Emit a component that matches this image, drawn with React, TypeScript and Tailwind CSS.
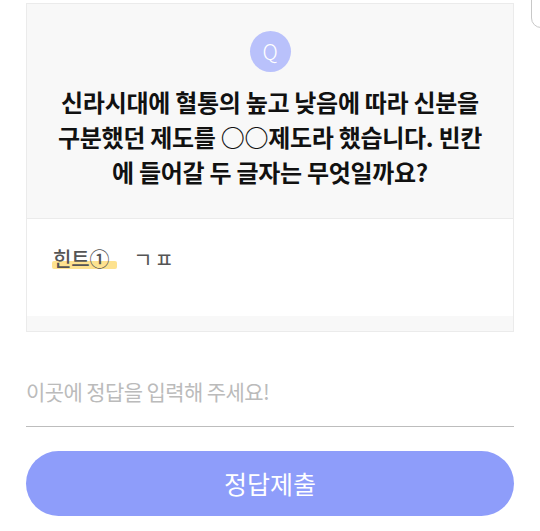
import React from 'react';

const font = { fontFamily: '"Noto Sans CJK KR", "Noto Sans", sans-serif' };

export default function App() {
  return (
    <div className="relative w-[540px] h-[531px] bg-white overflow-hidden" style={font}>
      {/* edge of the next card peeking in */}
      <div className="absolute left-[531px] top-[-12px] w-[40px] h-[40px] border border-[#c8c8c8] rounded-bl-[10px] bg-white" />

      <div className="px-[26px] pt-[3px]">
        <div className="border border-[#ebebeb]">
          <div className="bg-[#f8f8f8] flex flex-col items-center pt-[27px] pb-[29px] border-b border-[#ebebeb]">
            <div className="w-[41px] h-[41px] rounded-full bg-[#b9c1fb] flex items-center justify-center text-white text-[21px] font-light leading-none">
              Q
            </div>
            <p className="mt-[12px] text-center text-[24px] font-bold leading-[35px] text-[#111] tracking-[-0.3px]">
              신라시대에 혈통의 높고 낮음에 따라 신분을
              <br />
              구분했던 제도를 ○○제도라 했습니다. 빈칸
              <br />
              에 들어갈 두 글자는 무엇일까요?
            </p>
          </div>
          <div className="bg-white h-[97px] px-[26px] pt-[26px] flex items-start gap-[24px]">
            <span className="relative text-[20px] leading-[27px] text-[#555] font-medium tracking-[-0.2px]">
              <span className="absolute left-[-1px] right-[-8px] bottom-[3px] h-[8px] bg-[#fde28f] rounded-[2px]" />
              <span className="relative">힌트①</span>
            </span>
            <span className="text-[21px] leading-[27px] text-[#555] tracking-[2px]">ㄱㅍ</span>
          </div>
          <div className="h-[15px] bg-[#f8f8f8]" />
        </div>

        <div className="mt-[42px] border-b border-[#bdbdbd] pb-[18px]">
          <div className="text-[21px] leading-[34px] text-[#bbbbbb] tracking-[-0.6px]">이곳에 정답을 입력해 주세요!</div>
        </div>

        <button className="mt-[24px] w-full h-[65px] rounded-full bg-[#8e9dfa] text-white text-[25px] flex items-center justify-center">
          정답제출
        </button>
      </div>
    </div>
  );
}
